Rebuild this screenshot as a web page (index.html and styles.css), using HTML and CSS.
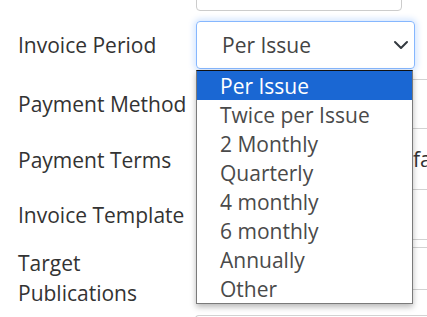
FILE: index.html
```html
<!DOCTYPE html>
<html lang="en">
<head>
  <meta charset="UTF-8" />
  <meta name="viewport" content="width=device-width, initial-scale=1.0"/>
  <title>Invoice settings</title>
  <link rel="stylesheet" href="styles.css">
</head>
<body>

  <form class="form">
    <div class="row row-top">
      <label class="label"></label>
      <div class="input input-top"></div>
    </div>

    <div class="row row-select">
      <label class="label">Invoice Period</label>
      <div class="select-wrap">
        <div class="select">
          <span>Per Issue</span>
          <svg class="chevron" viewBox="0 0 16 16" width="16" height="16">
            <path d="m2 5 6 6 6-6" fill="none" stroke="#343a40" stroke-width="2" stroke-linecap="round" stroke-linejoin="round"/>
          </svg>
        </div>
        <ul class="options">
          <li class="active">Per Issue</li>
          <li>Twice per Issue</li>
          <li>2 Monthly</li>
          <li>Quarterly</li>
          <li>4 monthly</li>
          <li>6 monthly</li>
          <li>Annually</li>
          <li>Other</li>
        </ul>
      </div>
    </div>

    <div class="row row-method">
      <label class="label">Payment Method</label>
      <div class="strip strip-method"></div>
    </div>

    <div class="row row-terms">
      <label class="label">Payment Terms</label>
      <div class="strip strip-terms"><span class="terms-text">fa</span></div>
    </div>

    <div class="row row-template">
      <label class="label">Invoice Template</label>
      <div class="strip strip-template"></div>
    </div>

    <div class="row row-target">
      <label class="label">Target Publications</label>
      <div class="strip strip-target"></div>
    </div>

    <div class="row row-last">
      <label class="label"></label>
      <div class="strip strip-last"></div>
    </div>
  </form>

</body>
</html>
```

FILE: styles.css
```css
body {
  margin: 0;
  font-family: 'Open Sans', sans-serif;
  font-size: 21px;
  color: #333;
  background: #fff;
  overflow: hidden;
}

.form {
  margin-top: -37px;
}

.row {
  display: grid;
  grid-template-columns: 196px 1fr;
  align-items: center;
}

.label {
  padding-left: 18px;
  padding-right: 6px;
  line-height: 30px;
}

.input {
  box-sizing: border-box;
  height: 48px;
  border: 1px solid #ccc;
  border-radius: 4px;
}

.row-top {
  margin-bottom: 10px;
}

.input-top {
  width: 206px;
}

.row-select {
  margin-bottom: 10px;
}

.select-wrap {
  position: relative;
  width: 219px;
}

.select {
  box-sizing: border-box;
  height: 48px;
  display: flex;
  align-items: center;
  justify-content: space-between;
  padding: 0 5px 0 25px;
  border: 1px solid #86b7fe;
  border-radius: 4px;
  box-shadow: 0 0 6px 2px rgba(13, 110, 253, 0.18);
  color: #444;
}

.chevron {
  display: block;
}

.options {
  position: absolute;
  top: calc(100% + 1px);
  left: 0;
  width: 217px;
  box-sizing: border-box;
  margin: 0;
  padding: 0;
  list-style: none;
  background: #fff;
  border: 1px solid #7a7a7a;
  border-top-color: #111;
  box-shadow: 0 3px 6px rgba(0, 0, 0, 0.28);
  z-index: 10;
}

.options li {
  height: 29px;
  line-height: 30px;
  padding-left: 23px;
  color: #4a4a4a;
  white-space: nowrap;
}

.options li.active {
  background: #1a67d3;
  color: #fff;
}

.strip {
  box-sizing: border-box;
  width: 280px;
  border-color: #d2d2d2;
  border-style: solid;
  border-width: 0;
}

.strip-method {
  height: 50px;
  border-top-width: 1px;
  border-bottom-width: 1px;
}

.strip-terms {
  height: 61px;
  border-bottom-width: 1px;
  display: flex;
  align-items: center;
  padding-left: 217px;
  white-space: nowrap;
}

.strip-template {
  height: 50px;
  border-bottom-width: 1px;
}

.row-target {
  height: 75px;
}

.strip-target {
  align-self: start;
  margin-top: 7px;
  height: 43px;
  border-top-width: 1px;
  border-bottom-width: 1px;
}

.strip-last {
  height: 40px;
  margin-left: -1px;
  border-top-width: 1px;
  border-left-width: 1px;
  border-radius: 4px 0 0 0;
}
```
